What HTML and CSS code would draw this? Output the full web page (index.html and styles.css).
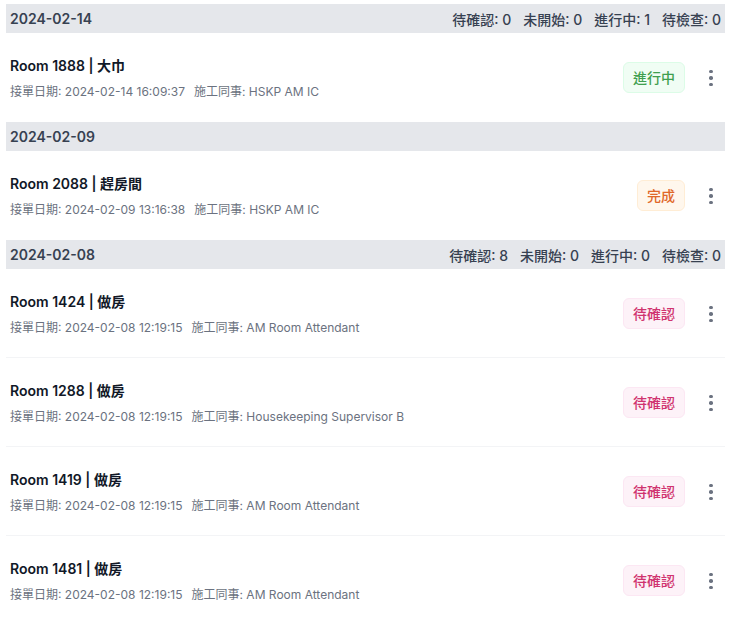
FILE: index.html
```html
<!DOCTYPE html>
<html lang="zh-Hant">
<head>
<meta charset="utf-8">
<link rel="stylesheet" href="styles.css">
</head>
<body>
<div class="list">
  <section class="group">
    <div class="group-head">
      <span class="date">2024-02-14</span>
      <div class="stats"><span>待確認: 0</span><span>未開始: 0</span><span>進行中: 1</span><span>待檢查: 0</span></div>
    </div>
    <div class="row">
      <div class="info">
        <div class="title">Room 1888 | 大巾</div>
        <div class="meta"><span>接單日期: 2024-02-14 16:09:37</span><span>施工同事: HSKP AM IC</span></div>
      </div>
      <span class="badge green">進行中</span>
      <button class="more"><span></span><span></span><span></span></button>
    </div>
  </section>
  <section class="group">
    <div class="group-head">
      <span class="date">2024-02-09</span>
    </div>
    <div class="row">
      <div class="info">
        <div class="title">Room 2088 | 趕房間</div>
        <div class="meta"><span>接單日期: 2024-02-09 13:16:38</span><span>施工同事: HSKP AM IC</span></div>
      </div>
      <span class="badge orange">完成</span>
      <button class="more"><span></span><span></span><span></span></button>
    </div>
  </section>
  <section class="group">
    <div class="group-head">
      <span class="date">2024-02-08</span>
      <div class="stats"><span>待確認: 8</span><span>未開始: 0</span><span>進行中: 0</span><span>待檢查: 0</span></div>
    </div>
    <div class="row">
      <div class="info">
        <div class="title">Room 1424 | 做房</div>
        <div class="meta"><span>接單日期: 2024-02-08 12:19:15</span><span>施工同事: AM Room Attendant</span></div>
      </div>
      <span class="badge pink">待確認</span>
      <button class="more"><span></span><span></span><span></span></button>
    </div>
    <div class="row">
      <div class="info">
        <div class="title">Room 1288 | 做房</div>
        <div class="meta"><span>接單日期: 2024-02-08 12:19:15</span><span>施工同事: Housekeeping Supervisor B</span></div>
      </div>
      <span class="badge pink">待確認</span>
      <button class="more"><span></span><span></span><span></span></button>
    </div>
    <div class="row">
      <div class="info">
        <div class="title">Room 1419 | 做房</div>
        <div class="meta"><span>接單日期: 2024-02-08 12:19:15</span><span>施工同事: AM Room Attendant</span></div>
      </div>
      <span class="badge pink">待確認</span>
      <button class="more"><span></span><span></span><span></span></button>
    </div>
    <div class="row">
      <div class="info">
        <div class="title">Room 1481 | 做房</div>
        <div class="meta"><span>接單日期: 2024-02-08 12:19:15</span><span>施工同事: AM Room Attendant</span></div>
      </div>
      <span class="badge pink">待確認</span>
      <button class="more"><span></span><span></span><span></span></button>
    </div>
  </section>
</div>
</body>
</html>
```

FILE: styles.css
```css
* { box-sizing: border-box; }
html, body { margin: 0; background: #fff; }
body {
  font-family: Inter, "Noto Sans CJK TC", sans-serif;
  color: #111827;
  padding: 4px 6px;
}
.list { display: flex; flex-direction: column; }
.group-head {
  display: flex;
  align-items: center;
  justify-content: space-between;
  height: 29px;
  padding: 0 4px;
  background: #e5e7eb;
  color: #374151;
  font-size: 14px;
  font-weight: 600;
}
.stats { display: flex; gap: 12px; font-weight: 500; }
.row {
  display: flex;
  align-items: center;
  padding: 22px 4px 20px;
  border-bottom: 1px solid #f3f4f6;
}
.group .row:last-child { border-bottom-color: transparent; }
.info { flex: 1; min-width: 0; display: flex; flex-direction: column; gap: 6px; }
.title {
  font-size: 14px;
  font-weight: 600;
  line-height: 22px;
  color: #111827;
}
.meta {
  display: flex;
  gap: 9px;
  font-size: 12px;
  line-height: 18px;
  color: #6b7280;
}
.badge {
  display: inline-flex;
  align-items: center;
  height: 31px;
  padding: 0 9px;
  margin-top: -2px;
  border-radius: 6px;
  font-size: 14px;
  font-weight: 500;
  border: 1px solid;
}
.badge.green { color: #3f9f4f; background: #f0fdf4; border-color: #dcfce7; }
.badge.orange { color: #e0672a; background: #fff7ed; border-color: #ffedd5; }
.badge.pink { color: #d0336f; background: #fdf2f8; border-color: #fce7f3; }
.more {
  margin-left: 16px;
  width: 20px;
  height: 20px;
  padding: 0;
  border: 0;
  background: none;
  display: flex;
  flex-direction: column;
  align-items: center;
  justify-content: center;
  gap: 3px;
}
.more span {
  width: 3.5px;
  height: 3.5px;
  border-radius: 50%;
  background: #6b7280;
}
```
